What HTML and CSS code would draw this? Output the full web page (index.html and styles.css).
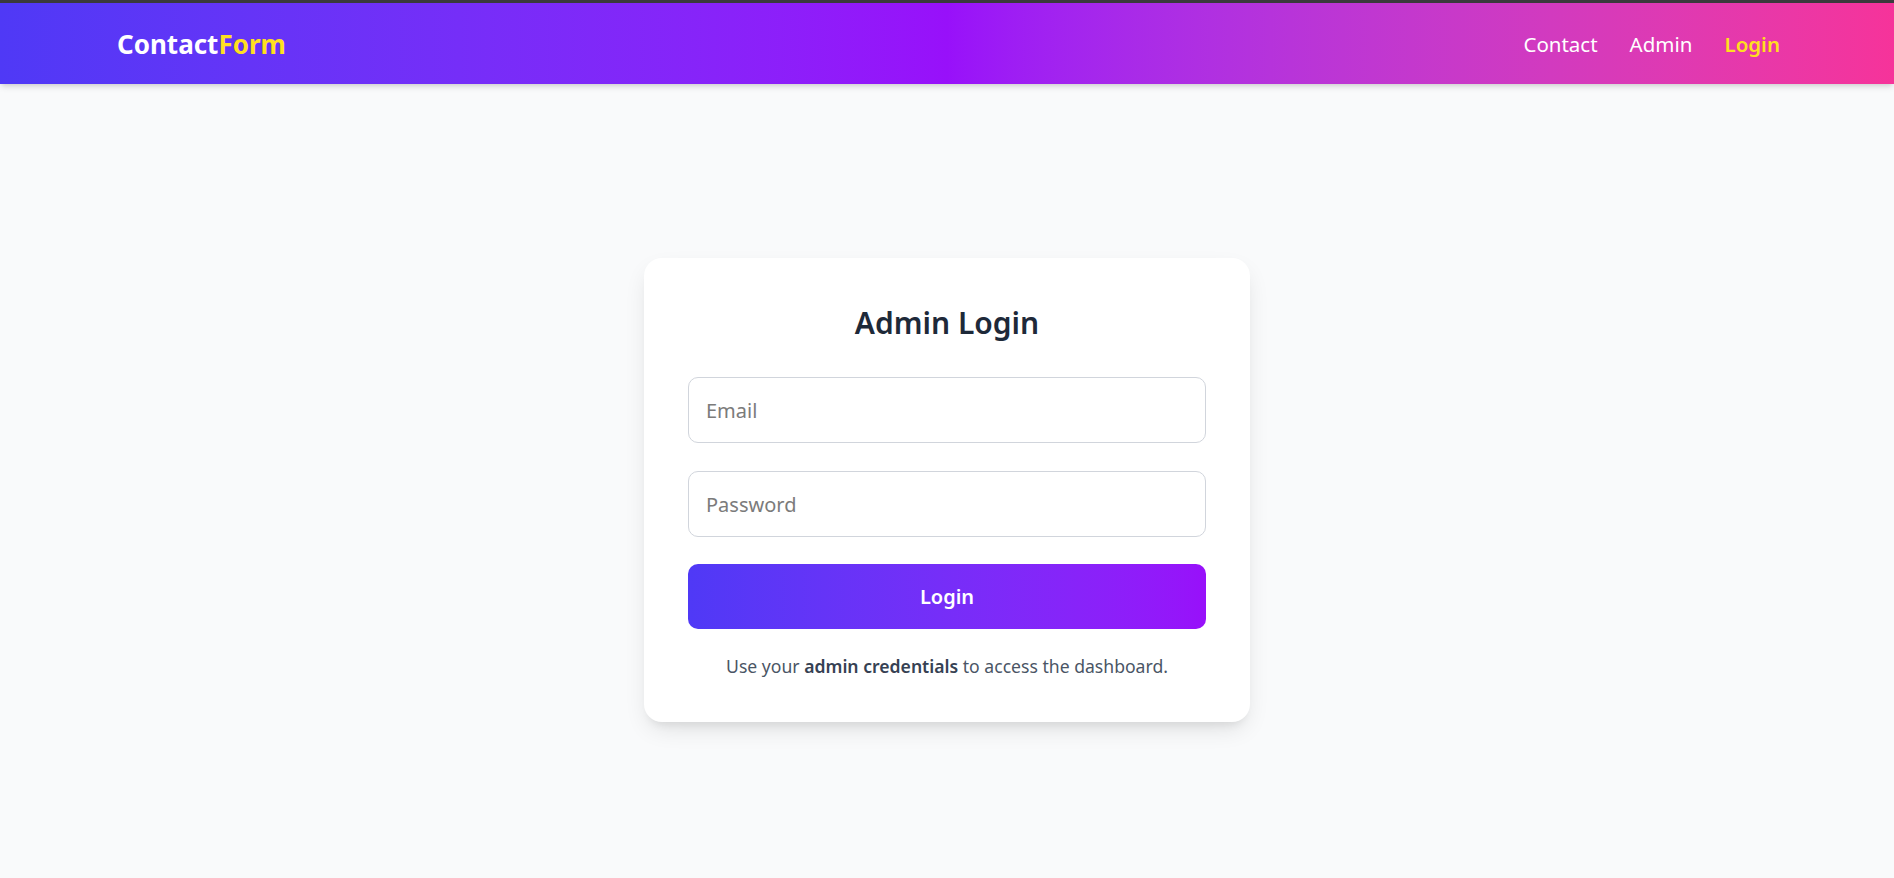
FILE: index.html
```html
<!DOCTYPE html>
<html lang="en">
<head>
<meta charset="utf-8">
<title>Admin Login</title>
<link rel="stylesheet" href="styles.css">
</head>
<body>
<header class="navbar">
  <a class="logo" href="#">Contact<span class="logo-accent">Form</span></a>
  <nav class="nav-links">
    <a href="#" class="nav-link">Contact</a>
    <a href="#" class="nav-link">Admin</a>
    <a href="#" class="nav-link nav-link-active">Login</a>
  </nav>
</header>
<main class="main">
  <form class="card">
    <h1 class="card-title">Admin Login</h1>
    <input class="field" type="email" placeholder="Email">
    <input class="field" type="password" placeholder="Password">
    <button class="btn" type="button">Login</button>
    <p class="hint">Use your <strong>admin credentials</strong> to access the dashboard.</p>
  </form>
</main>
</body>
</html>
```
FILE: styles.css
```css
* { box-sizing: border-box; }
html, body { margin: 0; padding: 0; }
body {
  font-family: "Noto Sans", "Open Sans", sans-serif;
  background: #f9fafb;
  min-height: 100vh;
}
.navbar {
  height: 84px;
  border-top: 3px solid #3a3a3c;
  background: linear-gradient(to right in oklab, #4f39f6, #9810fa, #f6339a);
  display: flex;
  align-items: center;
  justify-content: space-between;
  padding: 0 114px 0 117px;
  box-shadow: 0 4px 6px -1px rgba(0,0,0,0.12), 0 2px 4px -2px rgba(0,0,0,0.1);
  position: relative;
}
.logo {
  color: #fff;
  font-weight: 700;
  font-size: 26px;
  text-decoration: none;
}
.logo-accent { color: #ffdf20; }
.nav-links { display: flex; gap: 32px; }
.nav-link {
  color: #fff;
  text-decoration: none;
  font-size: 20.5px;
}
.nav-link-active { color: #ffdf20; font-weight: 600; }
.main {
  display: flex;
  justify-content: center;
  padding-top: 174px;
}
.card {
  width: 606px;
  background: #fff;
  border-radius: 18px;
  padding: 47px 44px 43px;
  box-shadow: 0 10px 25px -5px rgba(0,0,0,0.12), 0 8px 10px -6px rgba(0,0,0,0.08);
  display: flex;
  flex-direction: column;
}
.card-title {
  margin: 0 0 36px;
  text-align: center;
  font-size: 30px;
  line-height: 36px;
  font-weight: 600;
  color: #1e2939;
}
.field {
  height: 66px;
  border: 1px solid #d1d5dc;
  border-radius: 10px;
  padding: 0 17px;
  font-family: inherit;
  font-size: 20px;
  color: #1e2939;
  background: #fff;
  margin-bottom: 28px;
  outline: none;
}
.field + .field { margin-bottom: 27px; }
.field::placeholder { color: #7b7b7b; }
.btn {
  height: 65px;
  border: none;
  border-radius: 10px;
  background: linear-gradient(to right in oklab, #4f39f6, #9810fa);
  color: #fff;
  font-family: inherit;
  font-size: 20px;
  font-weight: 600;
  cursor: pointer;
}
.hint {
  margin: 24px 0 0;
  text-align: center;
  font-size: 17.6px;
  line-height: 26px;
  color: #4a5565;
}
.hint strong { font-weight: 600; color: #364153; }
```
